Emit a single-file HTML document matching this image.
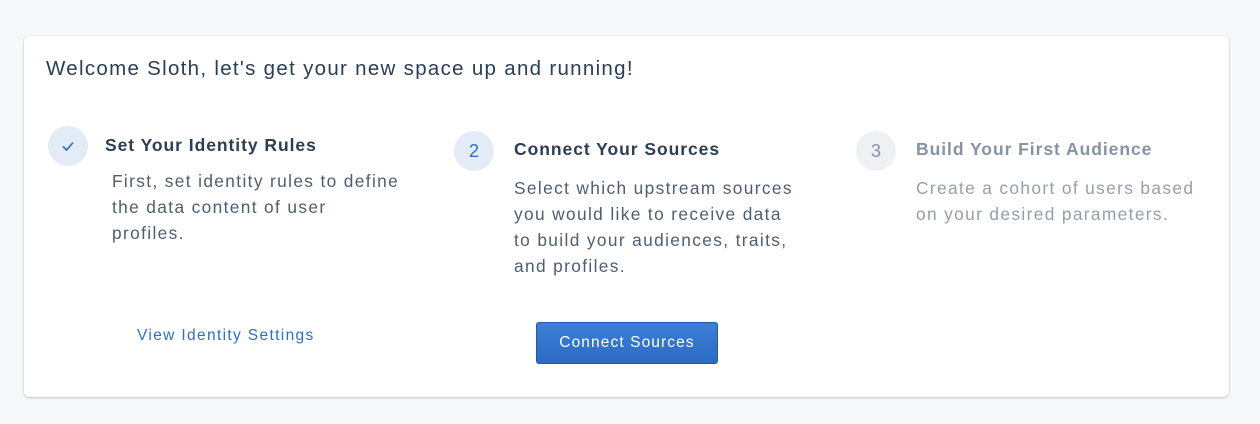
<!DOCTYPE html>
<html><head><style>
body{margin:0;width:1260px;height:424px;background:#f7f8fa;font-family:"Liberation Sans",sans-serif;position:relative;overflow:hidden}
.card{position:absolute;left:24px;top:36px;width:1205px;height:361px;background:#fff;border-radius:5px;box-shadow:0 1px 2px rgba(0,0,0,.18),0 0 0 1px rgba(0,0,0,.04)}
.a{position:absolute;white-space:nowrap}
.t{left:46px;top:57px;font-size:20.5px;color:#2b3e55;letter-spacing:1.3px}
.c{position:absolute;width:40px;height:40px;border-radius:50%;text-align:center;line-height:40px;font-size:18px}
.hd{font-size:17.5px;font-weight:bold;color:#2b3e55;letter-spacing:.95px}
.bd{font-size:17.3px;color:#4e5d70;line-height:26px;letter-spacing:1.37px}
.g .hd{color:#8693a3}.g .bd{color:#939fae}
</style></head><body>
<div class="card"></div>
<div class="a t">Welcome Sloth, let's get your new space up and running!</div>

<div class="c" style="left:48px;top:126px;background:#e2ebf6"><svg width="14" height="12" viewBox="0 0 14 12" style="margin-top:14px"><path d="M2 6.5l3.5 3.5L12 2.5" fill="none" stroke="#2f6fc4" stroke-width="1.7"/></svg></div>
<div class="a hd" style="left:105px;top:135px">Set Your Identity Rules</div>
<div class="a bd" style="left:112px;top:168px">First, set identity rules to define<br>the data content of user<br>profiles.</div>
<div class="a" style="left:137px;top:327px;font-size:15.5px;color:#2f6fc4;letter-spacing:1.35px">View Identity Settings</div>

<div class="c" style="left:454px;top:131px;background:#e2ebf6;color:#2f6fc4">2</div>
<div class="a hd" style="left:514px;top:139px">Connect Your Sources</div>
<div class="a bd" style="left:514px;top:175px">Select which upstream sources<br>you would like to receive data<br>to build your audiences, traits,<br>and profiles.</div>
<div class="a" style="left:536px;top:322px;width:180px;height:40px;border:1px solid #2158a8;border-radius:3px;background:linear-gradient(#3c7fd6,#2b6bc3);color:#fff;font-size:15.5px;text-align:center;line-height:40px;letter-spacing:1.1px">Connect Sources</div>

<div class="g">
<div class="c" style="left:856px;top:131px;background:#eef0f3;color:#8693a3">3</div>
<div class="a hd" style="left:916px;top:139px">Build Your First Audience</div>
<div class="a bd" style="left:916px;top:175px">Create a cohort of users based<br>on your desired parameters.</div>
</div>
</body></html>
